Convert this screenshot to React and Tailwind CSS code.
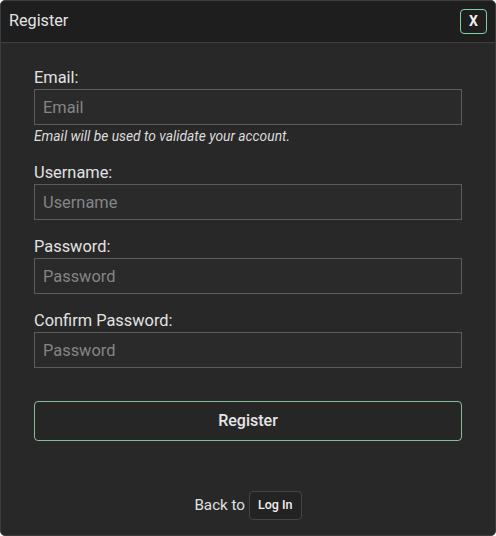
import { useState } from 'react';

const Field = ({ label, placeholder, type = 'text', hint }) => (
  <div className="flex flex-col">
    <label className="text-[16.4px] leading-[22px] text-[#e2e2e2]">{label}</label>
    <input
      type={type}
      placeholder={placeholder}
      className="h-[36px] w-full border border-[#5c5c5c] bg-[#2a2a2a] px-[8px] text-[16.4px] text-[#e2e2e2] placeholder-[#858585] outline-none"
    />
    {hint && (
      <p className="mt-[2px] text-[13.8px] italic leading-[18px] text-[#dcdcdc]">{hint}</p>
    )}
  </div>
);

export default function App() {
  const [open, setOpen] = useState(true);

  return (
    <div
      className="flex h-[536px] w-[496px] flex-col overflow-hidden rounded-[5px] border border-[#3c3c3c] bg-[#282828]"
      style={{ fontFamily: 'Roboto, "Liberation Sans", sans-serif' }}
    >
      {/* header */}
      <div className="flex h-[42px] shrink-0 items-center justify-between border-b border-[#3e3e3e] bg-[#1e1e1e] pl-[8px] pr-[8px]">
        <span className="text-[16.2px] text-[#e4e4e4]">Register</span>
        <button
          onClick={() => setOpen(!open)}
          className="flex h-[25px] w-[27px] items-center justify-center rounded-[4px] border border-[#7fd1a4] text-[14px] font-bold text-[#eeeeee]"
        >
          X
        </button>
      </div>

      {/* form */}
      <div className="flex flex-col px-[33px] pt-[24px]">
        <Field label="Email:" placeholder="Email" hint="Email will be used to validate your account." />
        <div className="mt-[17px]">
          <Field label="Username:" placeholder="Username" />
        </div>
        <div className="mt-[16px]">
          <Field label="Password:" placeholder="Password" type="password" />
        </div>
        <div className="mt-[16px]">
          <Field label="Confirm Password:" placeholder="Password" type="password" />
        </div>

        <button className="mt-[33px] h-[40px] w-full rounded-[4px] border border-[#7fbf98] bg-[#262626] text-[16px] font-medium text-[#e6e6e6]">
          Register
        </button>

        <div className="mt-[50px] flex items-center justify-center gap-[4px]">
          <span className="text-[15.2px] text-[#e0e0e0]">Back to</span>
          <button className="h-[29px] rounded-[4px] border border-[#444444] bg-[#232323] px-[8px] text-[12.5px] font-medium text-[#f0f0f0]">
            Log In
          </button>
        </div>
      </div>
    </div>
  );
}
